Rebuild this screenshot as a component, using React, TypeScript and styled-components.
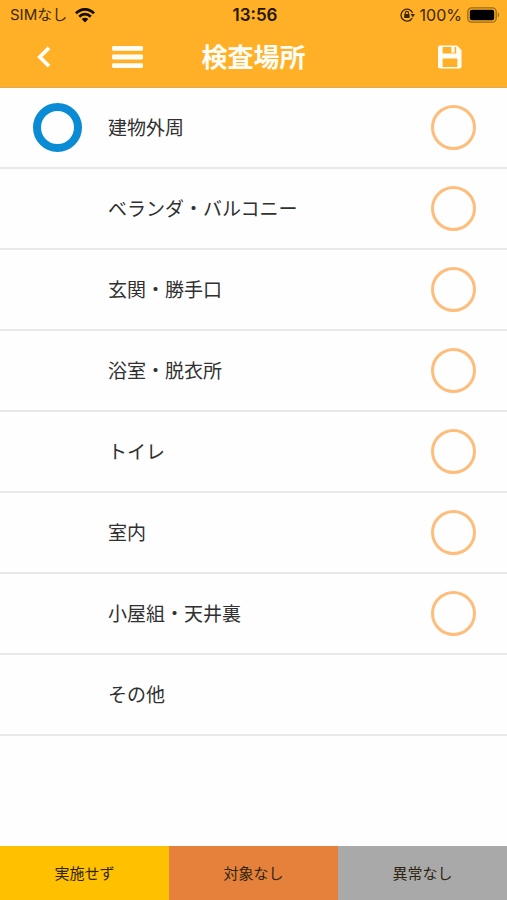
import React, { useState } from "react";
import styled, { createGlobalStyle } from "styled-components";

const GlobalStyle = createGlobalStyle`
  *, *::before, *::after { box-sizing: border-box; }
  body {
    margin: 0;
    background: #fefefe;
    color: #303030;
    font-family: "Noto Sans CJK JP", sans-serif;
  }
`;

const Screen = styled.div`
  display: flex;
  flex-direction: column;
  min-height: 100vh;
`;

const Header = styled.header`
  background: #ffb026;
  border-bottom: 1px solid #dcaa55;
`;

const StatusBar = styled.div`
  display: grid;
  grid-template-columns: 1fr auto 1fr;
  align-items: center;
  height: 30px;
  padding: 0 7px 0 10px;
  color: #3a2807;
  font-family: Inter, "Noto Sans CJK JP", sans-serif;
  font-size: 15px;
  line-height: 20px;
`;

const StatusGroup = styled.div<{ $end?: boolean }>`
  display: flex;
  align-items: center;
  justify-content: ${(p) => (p.$end ? "flex-end" : "flex-start")};
  gap: ${(p) => (p.$end ? 5 : 8)}px;
`;

const BatteryLevel = styled.span`
  font-size: 16px;
`;

const Clock = styled.time`
  color: #241800;
  font-size: 17px;
  font-weight: 600;
`;

const NavBar = styled.nav`
  display: grid;
  grid-template-columns: 1fr auto 1fr;
  align-items: center;
  height: 57px;
  padding-bottom: 4px;
`;

const NavGroup = styled.div<{ $end?: boolean }>`
  display: flex;
  justify-content: ${(p) => (p.$end ? "flex-end" : "flex-start")};
  gap: 43px;
  padding: ${(p) => (p.$end ? "0 37px 0 0" : "0 0 0 24px")};
`;

const IconButton = styled.button`
  display: flex;
  align-items: center;
  justify-content: center;
  width: 40px;
  height: 40px;
  padding: 0;
  border: 0;
  background: transparent;
  color: #fffdf5;
  cursor: pointer;
`;

const Title = styled.h1`
  margin: 0;
  padding-bottom: 2px;
  color: #fffdf5;
  font-size: 26px;
  font-weight: 700;
  line-height: 40px;
`;

const PlaceList = styled.ul`
  flex: 1;
  margin: 0;
  padding: 0;
  list-style: none;
`;

const PlaceRow = styled.li`
  display: grid;
  grid-template-columns: 49px 1fr 45px;
  column-gap: 26px;
  align-items: center;
  height: 81px;
  padding: 0 31px 0 33px;
  border-bottom: 2px solid #e9e9e9;
`;

const CurrentMark = styled.span`
  width: 49px;
  height: 49px;
  border: 8px solid #0a8bd3;
  border-radius: 50%;
`;

const PlaceLabel = styled.label`
  grid-column: 2;
  padding-bottom: 2px;
  font-size: 19px;
  line-height: 28px;
  cursor: pointer;
`;

const RoundCheck = styled.input`
  appearance: none;
  width: 45px;
  height: 45px;
  margin: 0;
  border: 3px solid #ffbd7c;
  border-radius: 50%;
  background: transparent;
  cursor: pointer;

  &:checked {
    background: #ffbd7c;
  }
`;

const ActionBar = styled.footer`
  display: grid;
  grid-template-columns: repeat(3, 1fr);
  height: 54px;
`;

const ActionButton = styled.button<{ $color: string }>`
  padding: 0;
  border: 0;
  background: ${(p) => p.$color};
  color: #2e2510;
  font-family: inherit;
  font-size: 15px;
  line-height: 22px;
  cursor: pointer;
`;

const WifiIcon = () => (
  <svg width="20" height="15" viewBox="0 0 20 15" aria-hidden="true">
    <g fill="none" stroke="#140d00" strokeWidth="2.7">
      <path d="M1 5.4C6-.1 14-.1 19 5.4" />
      <path d="M4.2 8.7c3.4-3.5 8.2-3.5 11.6 0" />
    </g>
    <path d="M6.7 11.1c2-1.8 4.6-1.8 6.6 0L10 14.6z" fill="#140d00" />
  </svg>
);

const RotationLockIcon = () => (
  <svg width="15" height="14" viewBox="0 0 15 14" aria-hidden="true">
    <path d="M12.2 10.2A6 6 0 1 1 12.6 5" fill="none" stroke="#3a2807" strokeWidth="1.3" />
    <path d="M10.6 6.1h4.4l-2.2 3.3z" fill="#3a2807" />
    <rect x="4.2" y="6.1" width="5.4" height="4" rx=".6" fill="#3a2807" />
    <path d="M5.3 6.3V5a1.6 1.6 0 0 1 3.2 0v1.3" fill="none" stroke="#3a2807" strokeWidth="1.1" />
  </svg>
);

const BatteryIcon = () => (
  <svg width="33" height="16" viewBox="0 0 33 16" aria-hidden="true">
    <rect x=".8" y=".8" width="28.4" height="14.4" rx="4" fill="none" stroke="#99691a" strokeWidth="1.3" />
    <rect x="2.8" y="2.8" width="24.4" height="10.4" rx="2" fill="#000" />
    <path d="M30.8 5.6c1.7.6 1.7 4.2 0 4.8z" fill="#99691a" />
  </svg>
);

const BackIcon = () => (
  <svg width="16" height="22" viewBox="0 0 16 22" aria-hidden="true">
    <path d="M13 1.8 3.8 11l9.2 9.2" fill="none" stroke="currentColor" strokeWidth="3.8" />
  </svg>
);

const MenuIcon = () => (
  <svg width="31" height="22" viewBox="0 0 31 22" fill="currentColor" aria-hidden="true">
    <rect width="31" height="4.8" rx="1.4" />
    <rect y="8.6" width="31" height="4.8" rx="1.4" />
    <rect y="17.2" width="31" height="4.8" rx="1.4" />
  </svg>
);

const SaveIcon = () => (
  <svg width="24" height="24" viewBox="0 0 24 24" aria-hidden="true">
    <path
      fill="currentColor"
      fillRule="evenodd"
      d="M2 .5h17L23.5 5v16.5a2 2 0 0 1-2 2H2a2 2 0 0 1-2-2v-19a2 2 0 0 1 2-2zM4.6 2v6.6h13.6V2zM4.6 13.4v8.7h14.8v-8.7z"
    />
    <rect x="13.4" y="2" width="3.2" height="5.6" fill="currentColor" />
  </svg>
);

const places = [
  { name: "建物外周", checkable: true },
  { name: "ベランダ・バルコニー", checkable: true },
  { name: "玄関・勝手口", checkable: true },
  { name: "浴室・脱衣所", checkable: true },
  { name: "トイレ", checkable: true },
  { name: "室内", checkable: true },
  { name: "小屋組・天井裏", checkable: true },
  { name: "その他", checkable: false },
];

const actions = [
  { label: "実施せず", color: "#ffc000" },
  { label: "対象なし", color: "#e5813a" },
  { label: "異常なし", color: "#a9a9a9" },
];

export default function App() {
  const [current, setCurrent] = useState(0);

  return (
    <Screen lang="ja">
      <GlobalStyle />
      <Header>
        <StatusBar>
          <StatusGroup>
            <span>SIMなし</span>
            <WifiIcon />
          </StatusGroup>
          <Clock>13:56</Clock>
          <StatusGroup $end>
            <RotationLockIcon />
            <BatteryLevel>100%</BatteryLevel>
            <BatteryIcon />
          </StatusGroup>
        </StatusBar>
        <NavBar>
          <NavGroup>
            <IconButton type="button" aria-label="戻る">
              <BackIcon />
            </IconButton>
            <IconButton type="button" aria-label="メニュー">
              <MenuIcon />
            </IconButton>
          </NavGroup>
          <Title>検査場所</Title>
          <NavGroup $end>
            <IconButton type="button" aria-label="保存">
              <SaveIcon />
            </IconButton>
          </NavGroup>
        </NavBar>
      </Header>
      <PlaceList>
        {places.map((place, i) => (
          <PlaceRow key={place.name} onClick={() => setCurrent(i)}>
            {i === current && <CurrentMark />}
            {place.checkable ? (
              <>
                <PlaceLabel htmlFor={`place-${i}`}>{place.name}</PlaceLabel>
                <RoundCheck id={`place-${i}`} type="checkbox" />
              </>
            ) : (
              <PlaceLabel as="span">{place.name}</PlaceLabel>
            )}
          </PlaceRow>
        ))}
      </PlaceList>
      <ActionBar>
        {actions.map((action) => (
          <ActionButton key={action.label} type="button" $color={action.color}>
            {action.label}
          </ActionButton>
        ))}
      </ActionBar>
    </Screen>
  );
}
